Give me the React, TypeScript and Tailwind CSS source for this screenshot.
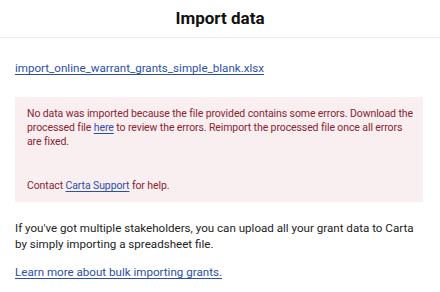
import React from "react";

export default function App() {
  return (
    <div className="w-[440px] h-[292px] bg-white overflow-hidden" style={{ fontFamily: "Roboto, 'Noto Sans', sans-serif" }}>
      <div className="h-[38px] flex items-center justify-center border-b border-[#e6eded]">
        <h1 className="text-[17px] font-bold text-[#111] pt-[1px]">Import data</h1>
      </div>
      <div className="px-[15px] pt-[21px] pr-[17px]">
        <a href="#" className="block text-[11.6px] leading-[18px] text-[#2c4fa8] underline underline-offset-2">
          import_online_warrant_grants_simple_blank.xlsx
        </a>
        <div className="mt-[20px] bg-[#f9eff0] pl-[12px] pr-[8px] pt-[10px] pb-[8px] h-[105px] text-[10.5px] tracking-[-0.1px] leading-[14px] text-[#8b2333]">
          <p>
            No data was imported because the file provided contains some errors. Download the processed file{" "}
            <a href="#" className="text-[#2c4fa8] underline underline-offset-2">here</a> to review the errors. Reimport the
            processed file once all errors
            <br />
            are fixed.
          </p>
          <p className="mt-[30px]">
            Contact <a href="#" className="text-[#2c4fa8] underline underline-offset-2">Carta Support</a> for help.
          </p>
        </div>
        <p className="mt-[18px] text-[11.6px] leading-[16px] text-[#222]">
          If you've got multiple stakeholders, you can upload all your grant data to Carta by simply importing a spreadsheet file.
        </p>
        <a href="#" className="block mt-[12px] text-[11.6px] leading-[16px] text-[#2c4fa8] underline underline-offset-2">
          Learn more about bulk importing grants.
        </a>
      </div>
    </div>
  );
}
